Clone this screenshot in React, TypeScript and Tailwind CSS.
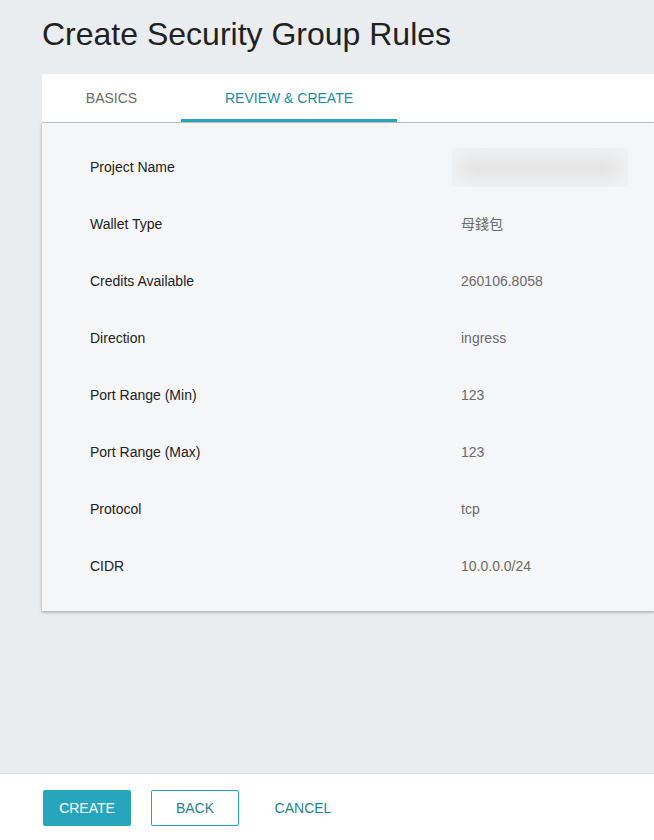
import React from "react";

const rows: { label: string; value: string; blurred?: boolean }[] = [
  { label: "Project Name", value: "", blurred: true },
  { label: "Wallet Type", value: "母錢包" },
  { label: "Credits Available", value: "260106.8058" },
  { label: "Direction", value: "ingress" },
  { label: "Port Range (Min)", value: "123" },
  { label: "Port Range (Max)", value: "123" },
  { label: "Protocol", value: "tcp" },
  { label: "CIDR", value: "10.0.0.0/24" },
];

export default function App() {
  return (
    <div
      className="w-[654px] h-[840px] bg-[#e9edf0] flex flex-col overflow-hidden"
      style={{ fontFamily: '"Liberation Sans", Arial, "Noto Sans CJK TC", sans-serif' }}
    >
      <div className="flex-1 pl-[42px]">
        <h1 className="text-[32px] leading-none text-[#212121] pt-[18px] h-[74px]">
          Create Security Group Rules
        </h1>
        <div className="bg-white h-[49px] flex border-b border-[#c8c8c8]">
          <div className="w-[139px] flex items-center justify-center text-[14px] text-[#6b6b6b] pt-[1px]">
            BASICS
          </div>
          <div className="w-[216px] flex items-center justify-center text-[14px] text-[#1f8aa3] border-b-[3px] border-[#28a5bd] pt-[4px]">
            REVIEW &amp; CREATE
          </div>
        </div>
        <div className="bg-[#f5f6f8] shadow-[0_1px_3px_rgba(0,0,0,0.35)] pt-[16px] pb-[16px]">
          {rows.map((r) => (
            <div key={r.label} className="h-[57px] flex items-center text-[14px]">
              <div className="w-[419px] pl-[48px] text-[#222]">{r.label}</div>
              {r.blurred ? (
                <div className="w-[176px] h-[39px] -ml-[9px] bg-[#f2f2f3] flex items-center justify-center overflow-hidden">
                  <div className="w-[160px] h-[24px] rounded-full bg-[#e4e4e4] blur-[8px]" />
                </div>
              ) : (
                <div className="text-[#6a6a6a]">{r.value}</div>
              )}
            </div>
          ))}
        </div>
      </div>
      <div className="h-[67px] bg-white border-t border-[#dcdfe3] flex items-center pl-[43px] pt-[2px] gap-[20px] text-[14px]">
        <button className="w-[88px] h-[36px] rounded-[2px] bg-[#27a5bd] text-white">CREATE</button>
        <button className="w-[88px] h-[36px] rounded-[2px] border border-[#27a5bd] text-[#1f7f95]">
          BACK
        </button>
        <button className="w-[88px] h-[36px] text-[#1f7f95]">CANCEL</button>
      </div>
    </div>
  );
}
